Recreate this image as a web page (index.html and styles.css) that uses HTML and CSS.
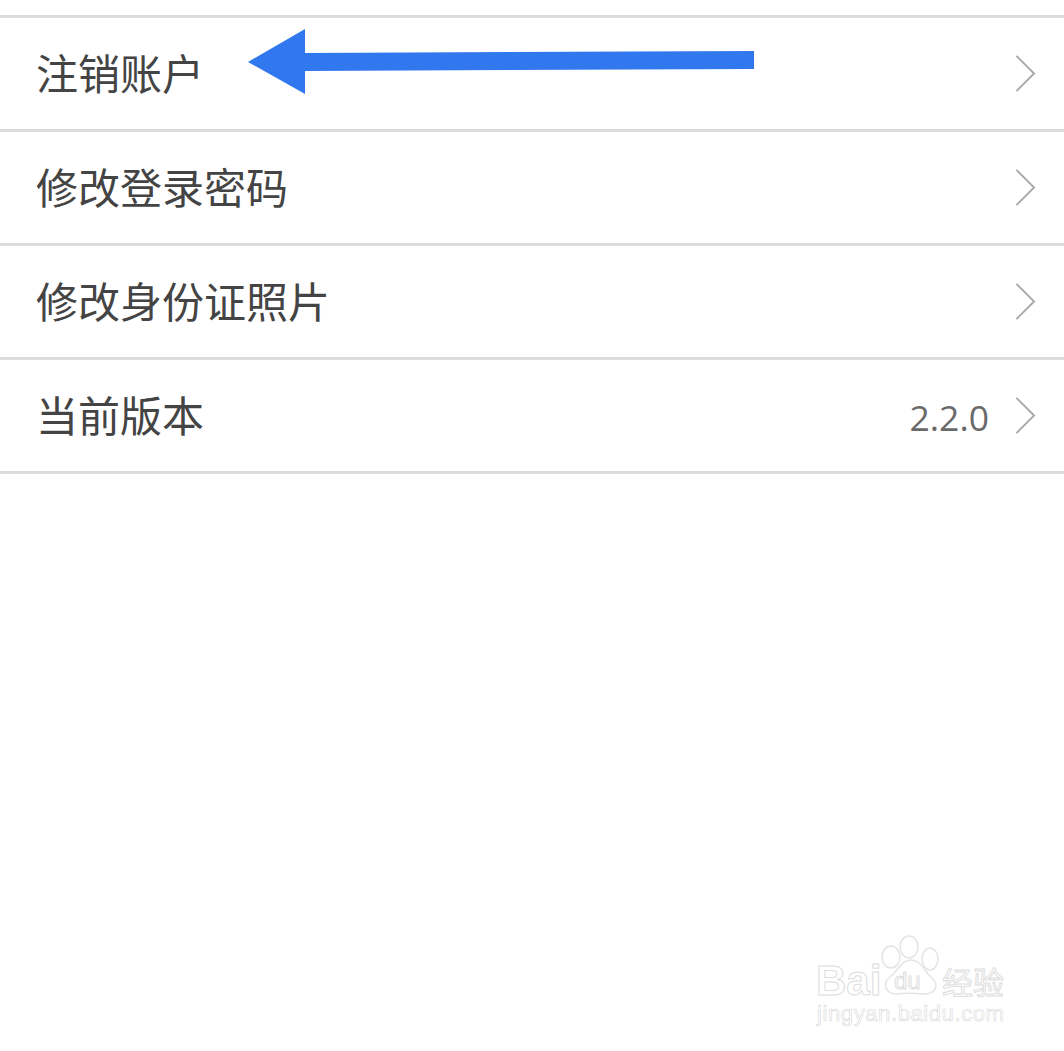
FILE: index.html
```html
<!DOCTYPE html>
<html lang="zh-CN">
<head>
<meta charset="utf-8">
<title>设置</title>
<link rel="stylesheet" href="styles.css">
</head>
<body>
<main class="list">
  <div class="row"><span class="label">注销账户</span><span class="right"><svg class="chev" viewBox="0 0 22 40"><path d="M1.5 1.5 L20 20 L1.5 38.5"/></svg></span></div>
  <div class="row"><span class="label">修改登录密码</span><span class="right"><svg class="chev" viewBox="0 0 22 40"><path d="M1.5 1.5 L20 20 L1.5 38.5"/></svg></span></div>
  <div class="row"><span class="label">修改身份证照片</span><span class="right"><svg class="chev" viewBox="0 0 22 40"><path d="M1.5 1.5 L20 20 L1.5 38.5"/></svg></span></div>
  <div class="row"><span class="label">当前版本</span><span class="right"><span class="value">2.2.0</span><svg class="chev" viewBox="0 0 22 40"><path d="M1.5 1.5 L20 20 L1.5 38.5"/></svg></span></div>
</main>
<svg class="arrow" viewBox="0 0 510 70"><polygon points="0,33 57,0 57,24 506,22 506,40 57,42 57,65"/></svg>
<svg class="mark" viewBox="0 0 200 100">
  <g class="paw">
    <ellipse cx="76" cy="24" rx="9" ry="11"/>
    <ellipse cx="94" cy="14" rx="9" ry="11"/>
    <ellipse cx="115" cy="26" rx="8" ry="11"/>
    <path d="M96 27 C106 27 109 38 116 44 C125 52 121 61 109 61 C100 61 92 59 82 61 C70 61 67 50 75 44 C83 38 86 27 96 27 Z"/>
  </g>
  <text class="mark-big" x="1" y="62">Bai</text>
  <text class="mark-du" x="79" y="56">du</text>
  <text class="mark-cn" x="127" y="61">经验</text>
  <text class="mark-url" x="2" y="88">jingyan.baidu.com</text>
</svg>
</body>
</html>
```
FILE: styles.css
```css
html, body {
  margin: 0;
  padding: 0;
  background: #ffffff;
}
body {
  position: relative;
  width: 1064px;
  height: 1051px;
  overflow: hidden;
  font-family: "Noto Sans CJK SC", "Liberation Sans", sans-serif;
}
.list {
  padding-top: 15px;
}
.row {
  box-sizing: border-box;
  height: 114px;
  border-top: 3px solid #dcdcdc;
  display: flex;
  align-items: center;
  justify-content: space-between;
  padding: 0 28px 0 36px;
}
.row:last-child {
  height: 117px;
  border-bottom: 3px solid #dcdcdc;
}
.label {
  font-size: 42px;
  line-height: 56px;
  margin-bottom: 4px;
  color: #444444;
}
.right {
  display: flex;
  align-items: center;
  gap: 26px;
}
.value {
  font-family: "Open Sans", "Noto Sans", sans-serif;
  font-size: 35.5px;
  margin-top: 3px;
  color: #6a6a6a;
}
.chev {
  width: 21px;
  height: 39px;
  display: block;
}
.chev path {
  fill: none;
  stroke: #a8a8a8;
  stroke-width: 2;
}
.arrow {
  position: absolute;
  left: 248px;
  top: 29px;
  width: 510px;
  height: 70px;
}
.arrow polygon {
  fill: #3177ee;
}
.mark {
  position: absolute;
  left: 815px;
  top: 933px;
  width: 200px;
  height: 100px;
}
.paw ellipse, .paw path {
  fill: #ffffff;
  stroke: #e4e4e4;
  stroke-width: 1.5;
}
.mark-big, .mark-du, .mark-cn, .mark-url {
  fill: #ffffff;
  stroke: #dddddd;
  stroke-width: 1;
}
.mark-big {
  font-family: "Liberation Sans", sans-serif;
  font-weight: 700;
  font-size: 42px;
}
.mark-du {
  font-family: "Liberation Sans", sans-serif;
  font-size: 24px;
}
.mark-cn {
  font-family: "Noto Sans CJK SC", sans-serif;
  font-size: 31px;
}
.mark-url {
  font-family: "Liberation Sans", sans-serif;
  font-size: 22px;
  letter-spacing: 0.6px;
  stroke-width: 0.7;
}
```
